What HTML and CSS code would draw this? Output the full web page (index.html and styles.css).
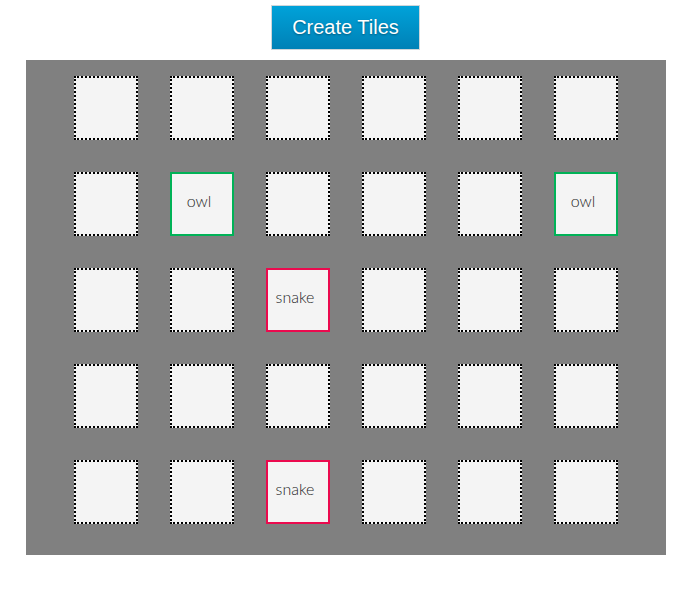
FILE: index.html
```html
<!DOCTYPE html>
<html>
<head>
<meta charset="utf-8">
<link rel="stylesheet" href="styles.css">
</head>
<body>
<div class="wrap">
  <button class="create">Create Tiles</button>
  <div class="board">
    <div class="tile"></div><div class="tile"></div><div class="tile"></div><div class="tile"></div><div class="tile"></div><div class="tile"></div>
    <div class="tile"></div><div class="tile owl">owl</div><div class="tile"></div><div class="tile"></div><div class="tile"></div><div class="tile owl">owl</div>
    <div class="tile"></div><div class="tile"></div><div class="tile snake">snake</div><div class="tile"></div><div class="tile"></div><div class="tile"></div>
    <div class="tile"></div><div class="tile"></div><div class="tile"></div><div class="tile"></div><div class="tile"></div><div class="tile"></div>
    <div class="tile"></div><div class="tile"></div><div class="tile snake">snake</div><div class="tile"></div><div class="tile"></div><div class="tile"></div>
  </div>
</div>
</body>
</html>
```

FILE: styles.css
```css
html, body {
  margin: 0;
  padding: 0;
  background: #ffffff;
}
.wrap {
  width: 640px;
  margin: 0 0 0 26px;
  display: flex;
  flex-direction: column;
}
.create {
  align-self: center;
  box-sizing: border-box;
  width: 149px;
  height: 45px;
  margin: 5px 0 10px -1px;
  border: 1px solid #cfd6da;
  background: linear-gradient(#00a2d9, #0081b6);
  color: #ffffff;
  font-family: "Liberation Sans", Arial, sans-serif;
  font-size: 20px;
  text-shadow: 0 1px 2px rgba(0, 0, 0, 0.35);
  padding: 0;
}
.board {
  background: #808080;
  display: flex;
  flex-wrap: wrap;
  padding: 0 32px 15px;
}
.tile {
  box-sizing: border-box;
  width: 64px;
  height: 64px;
  margin: 16px;
  background: #f4f4f4;
  border: 2px dotted #000000;
  display: flex;
  align-items: center;
  justify-content: center;
  padding: 0 6px 7px 0;
  font-family: Lato, "Open Sans", sans-serif;
  font-weight: 300;
  font-size: 16px;
  color: #1e1e1e;
}
.owl {
  border: 2px solid #00b257;
}
.snake {
  border: 2px solid #eb0a4e;
}
```
